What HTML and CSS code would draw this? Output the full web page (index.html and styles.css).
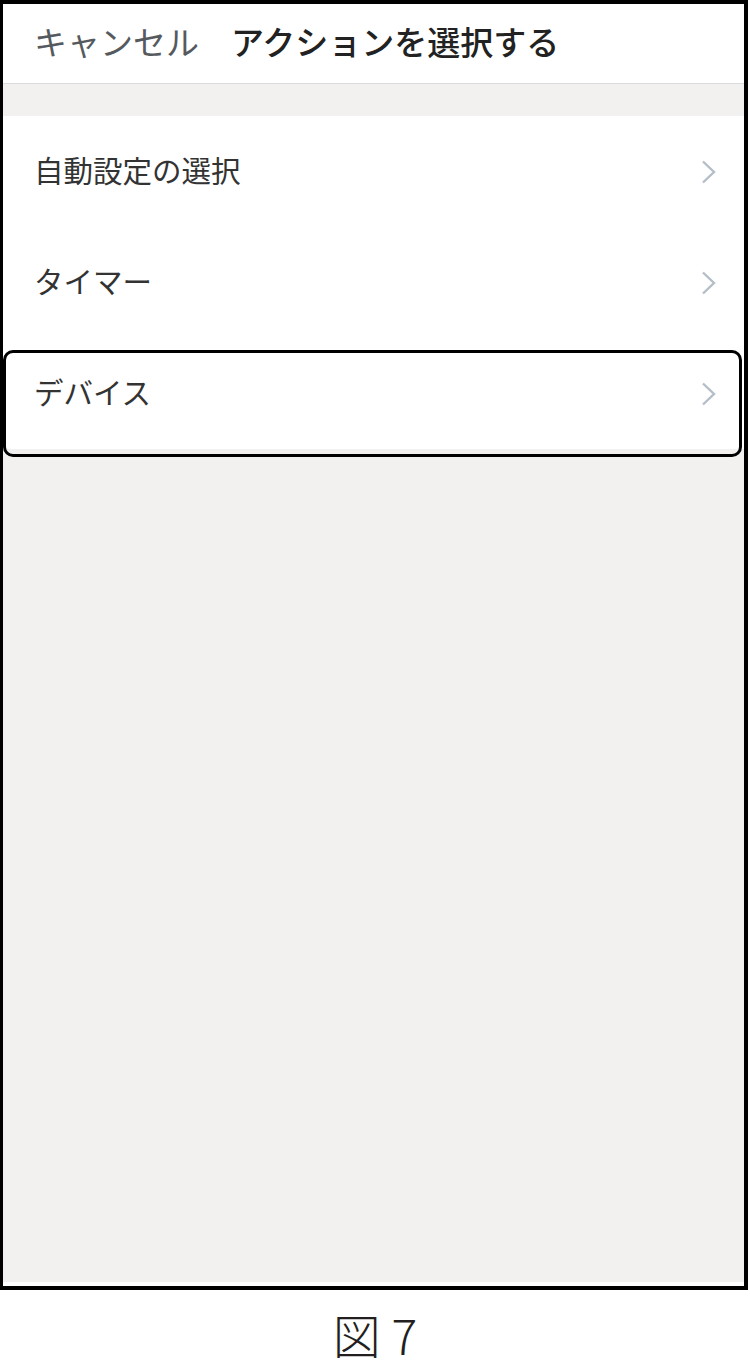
FILE: index.html
```html
<!DOCTYPE html>
<html lang="ja">
<head>
    <meta charset="UTF-8">
    <meta name="viewport" content="width=device-width, initial-scale=1.0">
    <title>アクションを選択する</title>
    <link rel="stylesheet" href="styles.css">
</head>
<body>
    <div class="phone">
        <!-- Header -->
        <header class="header">
            <span class="cancel">キャンセル</span>
            <span class="title">アクションを選択する</span>
        </header>

        <div class="spacer"></div>

        <!-- Action list -->
        <ul class="action-list">
            <li class="action-item">
                <span class="label">自動設定の選択</span>
                <svg class="chevron" viewBox="0 0 15 24"><path d="M2 1.5 L13 12 L2 22.5" /></svg>
            </li>
            <li class="action-item">
                <span class="label">タイマー</span>
                <svg class="chevron" viewBox="0 0 15 24"><path d="M2 1.5 L13 12 L2 22.5" /></svg>
            </li>
            <li class="action-item selected">
                <span class="label">デバイス</span>
                <svg class="chevron" viewBox="0 0 15 24"><path d="M2 1.5 L13 12 L2 22.5" /></svg>
            </li>
        </ul>

        <div class="filler"></div>
        <div class="home-bar"></div>
    </div>

    <p class="caption">図 7</p>
</body>
</html>
```

FILE: styles.css
```css
body {
    margin: 0;
    padding: 0;
    background: #fff;
    font-family: "Noto Sans CJK JP", "Noto Sans", sans-serif;
}

.phone {
    box-sizing: border-box;
    width: 748px;
    height: 1290px;
    border: 4px solid #000;
    border-left-width: 3px;
    display: flex;
    flex-direction: column;
    background: #f2f1ef;
}

.header {
    height: 80px;
    background: #fff;
    border-bottom: 1px solid #dcdcdc;
    display: flex;
    align-items: center;
    padding: 0 0 4px 31px;
    box-sizing: border-box;
    gap: 32px;
    font-size: 33px;
    line-height: 1;
}

.cancel {
    color: #555a5e;
}

.title {
    color: #222;
    font-weight: 500;
}

.spacer {
    height: 32px;
}

.action-list {
    list-style: none;
    margin: 0;
    padding: 0;
    background: #fff;
}

.action-item {
    position: relative;
    box-sizing: border-box;
    height: 111px;
    display: flex;
    align-items: center;
    justify-content: space-between;
    padding: 0 28px 0 31px;
    font-size: 29.5px;
    color: #333;
}

.label {
    margin-bottom: 5px;
}

.chevron {
    width: 15px;
    height: 24px;
    fill: none;
    stroke: #b3bec8;
    stroke-width: 2.4;
}

.action-item.selected::after {
    content: "";
    position: absolute;
    left: 0;
    right: 2px;
    top: 12px;
    bottom: -8px;
    border: 3px solid #000;
    border-radius: 10px;
}

.filler {
    flex: 1;
}

.home-bar {
    height: 4px;
    background: #fff;
}

.caption {
    margin: 20px 0 0;
    text-align: center;
    font-size: 48px;
    line-height: 1;
    color: #231f20;
    font-weight: 300;
}
```
